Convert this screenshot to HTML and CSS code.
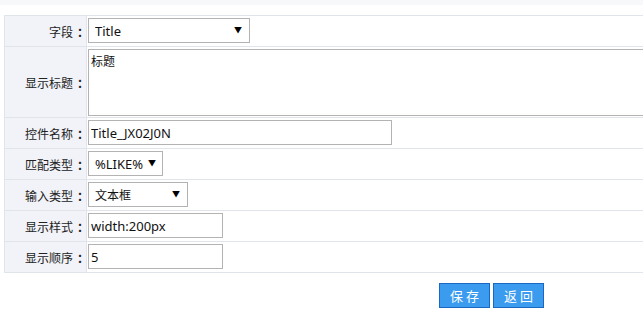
FILE: index.html
```html
<!DOCTYPE html>
<html lang="zh">
<head>
<meta charset="utf-8">
<title>字段编辑</title>
<link rel="stylesheet" href="styles.css">
</head>
<body>
<div class="topbar"></div>
<table class="form-table">
  <colgroup>
    <col class="col-label">
    <col>
  </colgroup>
  <tr>
    <td class="label">字段<span class="colon">：</span></td>
    <td class="value">
      <div class="select-wrap w-field">
        <select class="select"><option>Title</option></select>
        <span class="arrow">▼</span>
      </div>
    </td>
  </tr>
  <tr class="tall">
    <td class="label">显示标题<span class="colon">：</span></td>
    <td class="value"><textarea class="textarea">标题</textarea></td>
  </tr>
  <tr>
    <td class="label">控件名称<span class="colon">：</span></td>
    <td class="value"><input class="input w-name" type="text" value="Title_JX02J0N"></td>
  </tr>
  <tr>
    <td class="label">匹配类型<span class="colon">：</span></td>
    <td class="value">
      <div class="select-wrap w-match">
        <select class="select"><option>%LIKE%</option></select>
        <span class="arrow">▼</span>
      </div>
    </td>
  </tr>
  <tr>
    <td class="label">输入类型<span class="colon">：</span></td>
    <td class="value">
      <div class="select-wrap w-type">
        <select class="select select-cjk"><option>文本框</option></select>
        <span class="arrow">▼</span>
      </div>
    </td>
  </tr>
  <tr>
    <td class="label">显示样式<span class="colon">：</span></td>
    <td class="value"><input class="input w-short" type="text" value="width:200px"></td>
  </tr>
  <tr>
    <td class="label">显示顺序<span class="colon">：</span></td>
    <td class="value"><input class="input w-short" type="text" value="5"></td>
  </tr>
</table>
<div class="actions">
  <button class="btn" type="button">保存</button>
  <button class="btn" type="button">返回</button>
</div>
</body>
</html>
```

FILE: styles.css
```css
html, body {
  margin: 0;
  padding: 0;
  overflow: hidden;
  background: #ffffff;
  font-family: "Noto Sans CJK SC", "Noto Sans", sans-serif;
  font-size: 12px;
  color: #222;
}

.topbar {
  height: 5px;
  background: #f7f8fa;
}

.form-table {
  margin: 10px 0 0 4px;
  width: calc(100% - 4px);
  border-collapse: collapse;
  table-layout: fixed;
}

.col-label {
  width: 82px;
}

.form-table td {
  border: 1px solid #e1e5eb;
  height: 30px;
  padding: 0;
  vertical-align: middle;
}

.form-table td.value {
  border-right: 0;
  overflow: hidden;
}

.form-table tr.tall td {
  height: 70px;
}

.label {
  background: #f1f3f8;
  text-align: right;
  padding-right: 1px !important;
  font-size: 12px;
  color: #222;
  white-space: nowrap;
}

.colon {
  display: inline-block;
  padding-left: 4px;
  margin-right: -4px;
  font-weight: 700;
}

.value {
  padding-left: 1px !important;
}

.input,
.select,
.textarea {
  box-sizing: border-box;
  border: 1px solid #b3b3b3;
  background: #fff;
  font-family: "Noto Sans", "Noto Sans CJK SC", sans-serif;
  font-size: 13px;
  color: #111;
  margin: 0;
  outline: none;
}

.input {
  display: block;
  height: 25px;
  padding: 0 2px;
  margin-bottom: 1px;
}

.w-name { width: 304px; }
.w-short { width: 135px; }

.select-wrap {
  position: relative;
  height: 25px;
  margin-bottom: 1px;
}

.select {
  appearance: none;
  -webkit-appearance: none;
  width: 100%;
  height: 25px;
  padding: 0 0 0 6px;
  border-radius: 0;
}

.select-cjk {
  font-family: "Noto Sans CJK SC", sans-serif;
  font-size: 12px;
}

.arrow {
  position: absolute;
  top: 6px;
  right: 8px;
  font-size: 8px;
  line-height: 12px;
  color: #000;
  pointer-events: none;
}

.w-field { width: 162px; }
.w-match { width: 75px; }
.w-match .arrow { right: 7px; }
.w-type { width: 100px; }
.w-type .arrow { right: 8px; }

.textarea {
  display: block;
  width: 600px;
  height: 67px;
  padding: 2px 2px;
  resize: none;
  line-height: 18px;
  font-family: "Noto Sans CJK SC", sans-serif;
  font-size: 12px;
}

.actions {
  display: flex;
  gap: 3px;
  padding: 10px 0 0 439px;
}

.btn {
  box-sizing: border-box;
  width: 51px;
  height: 25px;
  padding: 0 0 0 3px;
  background: #3a9bef;
  border: 1px solid #1a68c2;
  color: #fff;
  font-family: "Noto Sans CJK SC", "Noto Sans", sans-serif;
  font-size: 13px;
  letter-spacing: 3px;
  cursor: pointer;
}
```
